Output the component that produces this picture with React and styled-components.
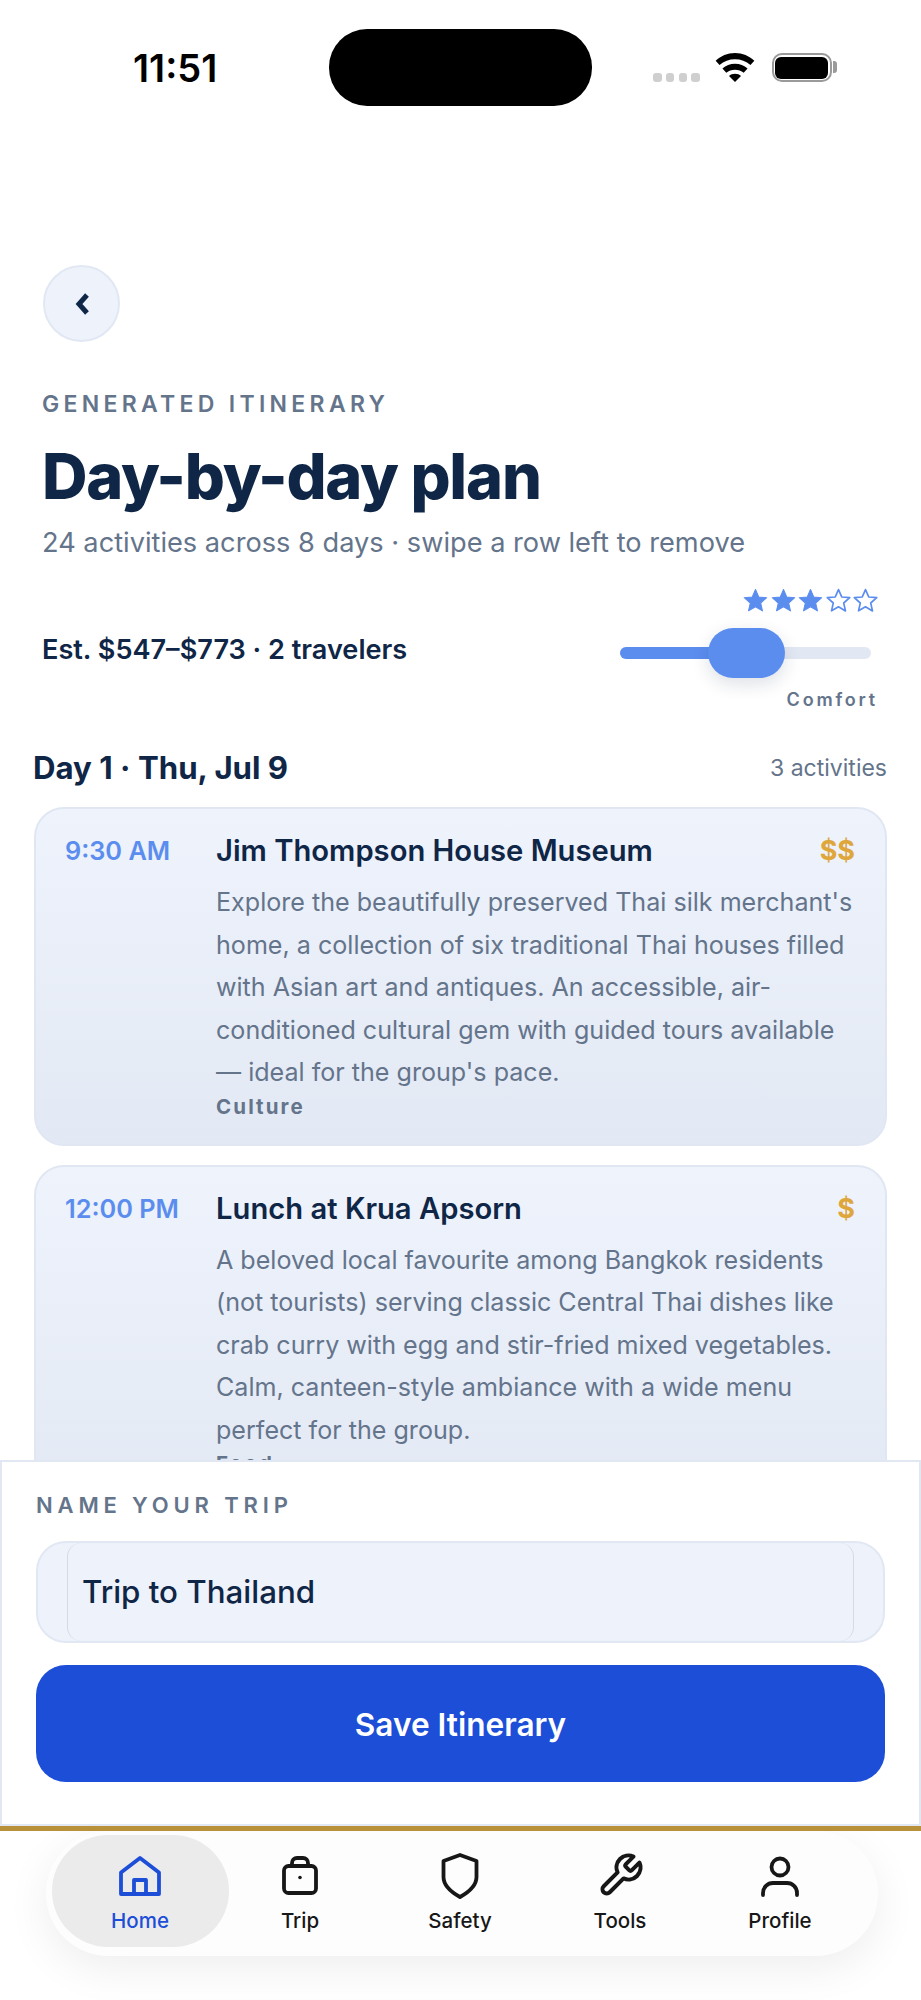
import React from 'react';
import styled, { createGlobalStyle } from 'styled-components';

const GlobalStyle = createGlobalStyle`
  html, body {
    margin: 0;
    padding: 0;
    background: #fff;
  }
  * {
    box-sizing: border-box;
  }
`;

const Page = styled.div`
  width: 921px;
  height: 2000px;
  display: flex;
  flex-direction: column;
  overflow: hidden;
  background: #fff;
  font-family: Inter, 'Liberation Sans', sans-serif;
  color: #0f2647;
`;

const Scroll = styled.div`
  flex: 1;
  min-height: 0;
  overflow: hidden;
`;

const StatusBar = styled.div`
  display: flex;
  align-items: flex-start;
  height: 265px;
  padding: 29px 0 0 133px;
`;

const Time = styled.div`
  width: 196px;
  margin-top: 17px;
  font-size: 38px;
  line-height: 44px;
  font-weight: 600;
  color: #000;
`;

const Island = styled.div`
  width: 263px;
  height: 77px;
  border-radius: 38px;
  background: #000;
`;

const StatusIcons = styled.div`
  display: flex;
  align-items: flex-end;
  height: 53px;
  margin-left: 61px;
`;

const Dots = styled.div`
  display: flex;
  gap: 4.3px;
`;

const Dot = styled.span`
  width: 8.5px;
  height: 9px;
  border-radius: 3px;
  background: #cfcfcf;
`;

const WifiIcon = styled.svg`
  width: 40px;
  height: 29px;
  margin: 0 17px 0 15px;
`;

const Battery = styled.div`
  position: relative;
  width: 60px;
  height: 29px;
  padding: 1.5px;
  border: 2.5px solid #9a9a9a;
  border-radius: 10px;

  &::before {
    content: '';
    display: block;
    width: 100%;
    height: 100%;
    border-radius: 6px;
    background: #000;
  }
  &::after {
    content: '';
    position: absolute;
    right: -7px;
    top: 6px;
    width: 4px;
    height: 12px;
    border-radius: 0 3px 3px 0;
    background: #9a9a9a;
  }
`;

const Header = styled.div`
  padding: 0 43px 0 42px;
`;

const BackButton = styled.button`
  display: flex;
  align-items: center;
  justify-content: center;
  width: 77px;
  height: 77px;
  margin-left: 1px;
  padding: 0;
  border: 2px solid #e2e8f3;
  border-radius: 50%;
  background: #edf2fb;
`;

const Eyebrow = styled.div`
  margin-top: 47px;
  font-size: 23px;
  line-height: 30px;
  font-weight: 600;
  letter-spacing: 4.3px;
  color: #64748b;
`;

const Title = styled.h1`
  margin: 19px 0 0;
  font-size: 63px;
  line-height: 76px;
  font-weight: 800;
  letter-spacing: -1.2px;
  color: #0f2647;
`;

const Subtitle = styled.div`
  margin-top: 11px;
  font-size: 27.2px;
  line-height: 36px;
  color: #64748b;
`;

const EstRow = styled.div`
  display: flex;
  justify-content: space-between;
  align-items: center;
  margin-top: 27px;
`;

const Estimate = styled.div`
  font-size: 27.1px;
  line-height: 36px;
  font-weight: 600;
  color: #0f2647;
`;

const Comfort = styled.div`
  display: flex;
  flex-direction: column;
  align-items: flex-end;
`;

const Stars = styled.div`
  display: flex;
  gap: 2.5px;
`;

const Slider = styled.div`
  position: relative;
  width: 251px;
  height: 12px;
  margin: 34px 7px 0 0;
  border-radius: 6px;
  background: #e2e8f3;
`;

const SliderFill = styled.div`
  height: 100%;
  border-radius: 6px;
  background: #5b8def;
`;

const SliderThumb = styled.div`
  position: absolute;
  top: -19px;
  width: 77px;
  height: 50px;
  border-radius: 25px;
  background: #5b8def;
  box-shadow: 0 6px 18px rgba(15, 38, 71, 0.14);
`;

const ComfortLabel = styled.div`
  margin-top: 30px;
  font-size: 18px;
  line-height: 22px;
  font-weight: 600;
  letter-spacing: 2.8px;
  color: #64748b;
`;

const Days = styled.div`
  padding: 0 34px;
`;

const DayHeader = styled.div`
  display: flex;
  justify-content: space-between;
  align-items: center;
  margin-top: 37px;
`;

const DayTitle = styled.div`
  margin-left: -1px;
  font-size: 31.2px;
  line-height: 40px;
  font-weight: 700;
  color: #0f2647;
`;

const DayCount = styled.div`
  font-size: 23px;
  line-height: 40px;
  color: #64748b;
`;

const Card = styled.div`
  display: flex;
  margin-top: ${(props) => props.gap}px;
  padding: 24px 30px 24px 29px;
  border: 2px solid #e0e7f3;
  border-radius: 30px;
  background: linear-gradient(180deg, #eef3fc 0%, #e3e9f4 100%);
`;

const CardTime = styled.div`
  flex: 0 0 151px;
  font-size: 25.3px;
  line-height: 36px;
  font-weight: 600;
  color: #5b8def;
`;

const CardBody = styled.div`
  flex: 1;
  min-width: 0;
`;

const CardTop = styled.div`
  display: flex;
  justify-content: space-between;
`;

const CardTitle = styled.div`
  font-size: 29.2px;
  line-height: 36px;
  font-weight: 600;
  color: #0f2647;
`;

const Price = styled.div`
  font-size: 27px;
  line-height: 36px;
  font-weight: 700;
  color: #dfa63c;
`;

const CardText = styled.div`
  margin-top: 12px;
  font-size: 25.1px;
  line-height: 42.5px;
  color: #64748b;
`;

const CardTag = styled.div`
  font-size: 20.5px;
  line-height: 26px;
  font-weight: 700;
  letter-spacing: 2.1px;
  color: #64748b;
`;

const SavePanel = styled.div`
  height: 366px;
  padding: 28px 34px 0;
  border: 2px solid #e2e8f3;
  background: #fff;
`;

const PanelLabel = styled.div`
  font-size: 22px;
  line-height: 30px;
  font-weight: 600;
  letter-spacing: 4.85px;
  color: #64748b;
`;

const InputShell = styled.div`
  height: 102px;
  margin-top: 21px;
  padding: 0 29px;
  border: 2px solid #e2e8f3;
  border-radius: 30px;
  background: #edf2fb;
`;

const NameInput = styled.input`
  display: block;
  width: 100%;
  height: 100%;
  padding: 0 14px;
  border: 0;
  border-left: 1.5px solid #d4dae6;
  border-right: 1.5px solid #d4dae6;
  border-radius: 14px;
  outline: none;
  background: #edf2fb;
  font-family: inherit;
  font-size: 31.3px;
  font-weight: 500;
  color: #0f2647;
`;

const SaveButton = styled.button`
  display: block;
  width: 100%;
  height: 117px;
  margin-top: 22px;
  padding: 2px 0 0;
  border: 0;
  border-radius: 30px;
  background: #1d4ed8;
  font-family: inherit;
  font-size: 31.6px;
  font-weight: 600;
  color: #fff;
`;

const TabArea = styled.div`
  height: 174px;
  padding: 0 43px 0 46px;
  border-top: 5px solid #b8913a;
  background: #fff;
  overflow: hidden;
`;

const TabBar = styled.nav`
  display: flex;
  height: 125px;
  padding: 4px 18px 0 14px;
  border-radius: 62px;
  background: #fdfdfd;
  box-shadow: 0 12px 44px rgba(0, 0, 0, 0.07);
`;

const Tab = styled.div`
  flex: 0 0 ${(props) => (props.$active ? 177 : 160)}px;
  display: flex;
  flex-direction: column;
  align-items: center;
  height: 112px;
  margin: 0 ${(props) => (props.$active ? -8.5 : 0)}px;
  padding-top: 18px;
  border-radius: 56px;
  background: ${(props) => (props.$active ? '#ebebeb' : 'transparent')};
  color: ${(props) => (props.$active ? '#1d4ed8' : '#171717')};
`;

const TabIcon = styled.svg`
  display: block;
  width: 48px;
  height: 48px;
`;

const TabLabel = styled.div`
  margin-top: 7px;
  font-size: 20.5px;
  line-height: 26px;
  font-weight: 500;
`;

const Star = ({ filled }) => (
  <svg width="25" height="25" viewBox="0 0 24 24">
    <path
      d="M12 1.5l3.1 7.1 7.7.7-5.8 5.1 1.7 7.6L12 18l-6.7 3.9L7 14.4 1.2 9.3l7.7-.7z"
      fill={filled ? '#5b8def' : '#fff'}
      stroke="#5b8def"
      strokeWidth={filled ? 1 : 1.6}
      strokeLinejoin="round"
    />
  </svg>
);

const icons = {
  home: (
    <>
      <path d="M24 5 43 19.500V41H5V19.500z" />
      <path d="M18 41V27h12v14" />
    </>
  ),
  trip: (
    <>
      <rect x="8" y="13" width="32" height="27" rx="4.500" />
      <path d="M16 13v-3a5 5 0 0 1 5-5h6a5 5 0 0 1 5 5v3" />
      <circle cx="24" cy="24.500" r="1.800" fill="currentColor" stroke="none" />
    </>
  ),
  shield: <path d="M24 2 40.500 8v16c0 9-7.500 15-16.500 20-9-5-16.500-11-16.500-20V8z" />,
  tools: (
    <path
      d="M14.700 6.300a1 1 0 0 0 0 1.400l1.600 1.600a1 1 0 0 0 1.400 0l3.770-3.770a6 6 0 0 1-7.940 7.940l-6.910 6.910a2.120 2.120 0 0 1-3-3l6.910-6.910a6 6 0 0 1 7.940-7.940l-3.760 3.760z"
      transform="translate(0.500 -1.500) scale(2)"
      strokeWidth="2"
    />
  ),
  user: (
    <>
      <circle cx="24" cy="14" r="8.500" />
      <path d="M7 42v-2a10 10 0 0 1 10-10h14a10 10 0 0 1 10 10v2" />
    </>
  ),
};

const tabs = [
  { key: 'home', label: 'Home', active: true },
  { key: 'trip', label: 'Trip' },
  { key: 'shield', label: 'Safety' },
  { key: 'tools', label: 'Tools' },
  { key: 'user', label: 'Profile' },
];

const activities = [
  {
    time: '9:30 AM',
    title: 'Jim Thompson House Museum',
    price: '$$',
    text: "Explore the beautifully preserved Thai silk merchant's home, a collection of six traditional Thai houses filled with Asian art and antiques. An accessible, air-conditioned cultural gem with guided tours available — ideal for the group's pace.",
    tag: 'Culture',
  },
  {
    time: '12:00 PM',
    title: 'Lunch at Krua Apsorn',
    price: '$',
    text: 'A beloved local favourite among Bangkok residents (not tourists) serving classic Central Thai dishes like crab curry with egg and stir-fried mixed vegetables. Calm, canteen-style ambiance with a wide menu perfect for the group.',
    tag: 'Food',
  },
];

function App() {
  return (
    <Page>
      <GlobalStyle />
      <Scroll>
        <StatusBar>
          <Time>11:51</Time>
          <Island />
          <StatusIcons>
            <Dots>
              <Dot />
              <Dot />
              <Dot />
              <Dot />
            </Dots>
            <WifiIcon viewBox="0 0 40 30">
              <path d="M20 0C12 0 5.500 3 0 8l4 4.500C8.500 8.500 14 6.500 20 6.500s11.500 2 16 6L40 8C34.500 3 28 0 20 0z" />
              <path d="M20 11c-5 0-9.500 2-13 5l4 4.500c2.500-2 5.500-3.200 9-3.200s6.500 1.200 9 3.200l4-4.500c-3.500-3-8-5-13-5z" />
              <path d="M20 21.500c-2.500 0-4.700.8-6.200 2.200L20 30l6.200-6.300c-1.500-1.400-3.700-2.200-6.200-2.200z" />
            </WifiIcon>
            <Battery />
          </StatusIcons>
        </StatusBar>
        <Header>
          <BackButton aria-label="Back">
            <svg width="18" height="22" viewBox="0 0 18 22">
              <path d="M14 2 6 11l8 9" fill="none" stroke="#0f2647" strokeWidth="5" />
            </svg>
          </BackButton>
          <Eyebrow>GENERATED ITINERARY</Eyebrow>
          <Title>Day-by-day plan</Title>
          <Subtitle>24 activities across 8 days · swipe a row left to remove</Subtitle>
          <EstRow>
            <Estimate>Est. $547–$773 · 2 travelers</Estimate>
            <Comfort>
              <Stars>
                {[1, 2, 3, 4, 5].map((n) => (
                  <Star key={n} filled={n <= 3} />
                ))}
              </Stars>
              <Slider>
                <SliderFill style={{ width: '50%' }} />
                <SliderThumb style={{ left: 88 }} />
              </Slider>
              <ComfortLabel>Comfort</ComfortLabel>
            </Comfort>
          </EstRow>
        </Header>
        <Days>
          <DayHeader>
            <DayTitle>Day 1 · Thu, Jul 9</DayTitle>
            <DayCount>3 activities</DayCount>
          </DayHeader>
          {activities.map((item, i) => (
            <Card key={item.title} gap={19}>
              <CardTime>{item.time}</CardTime>
              <CardBody>
                <CardTop>
                  <CardTitle>{item.title}</CardTitle>
                  <Price>{item.price}</Price>
                </CardTop>
                <CardText>{item.text}</CardText>
                <CardTag>{item.tag}</CardTag>
              </CardBody>
            </Card>
          ))}
        </Days>
      </Scroll>
      <SavePanel>
        <PanelLabel>NAME YOUR TRIP</PanelLabel>
        <InputShell>
          <NameInput defaultValue="Trip to Thailand" />
        </InputShell>
        <SaveButton>Save Itinerary</SaveButton>
      </SavePanel>
      <TabArea>
        <TabBar>
          {tabs.map((tab) => (
            <Tab key={tab.key} $active={tab.active}>
              <TabIcon viewBox="0 0 48 48" fill="none" stroke="currentColor" strokeWidth="3.800" strokeLinecap="round" strokeLinejoin="round">
                {icons[tab.key]}
              </TabIcon>
              <TabLabel>{tab.label}</TabLabel>
            </Tab>
          ))}
        </TabBar>
      </TabArea>
    </Page>
  );
}

export default App;
